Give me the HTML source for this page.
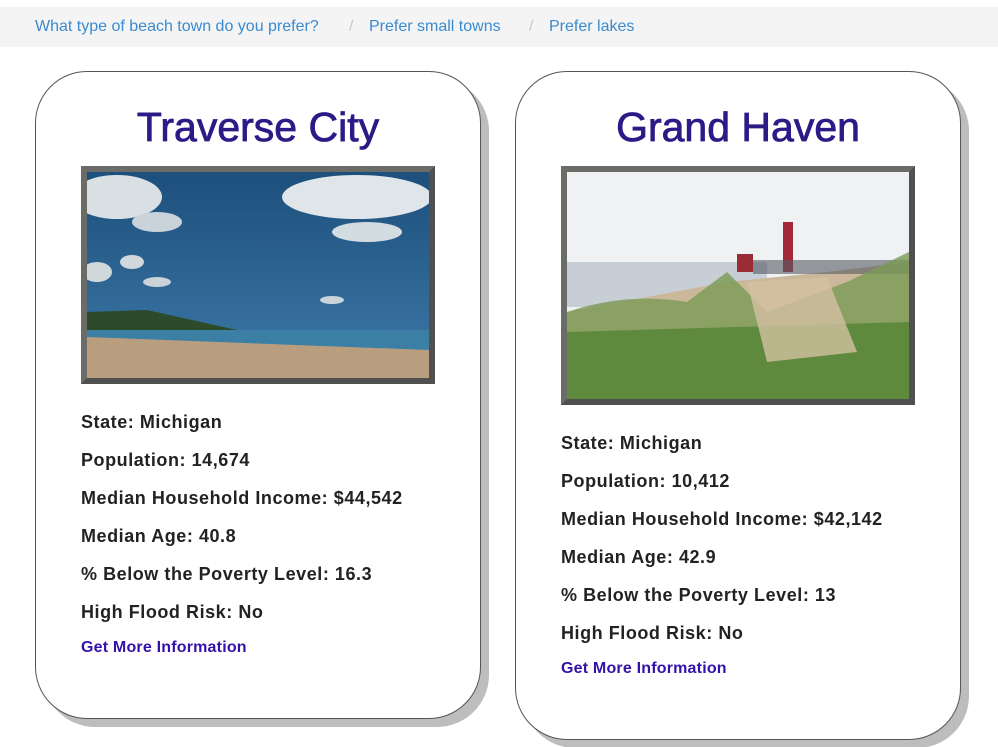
<!DOCTYPE html>
<html><head><style>
body{margin:0;width:998px;height:747px;background:#fff;font-family:"Liberation Sans",sans-serif;position:relative;overflow:hidden}
.bc{position:absolute;left:0;top:7px;width:998px;height:40px;background:#f4f4f4;font-family:"Liberation Sans",Arial,sans-serif;font-size:16px;color:#3a8ad0}
.bc span{position:absolute;top:11px}
.sep{color:#c8c8c8}
.card{position:absolute;width:444px;border:1px solid #555;border-radius:52px;background:#fff;box-shadow:8px 8px 0 #bdbdbd}
h1{position:absolute;left:0;width:100%;text-align:center;margin:0;top:32px;font-size:41px;font-weight:normal;color:#2e1a87;font-family:"Liberation Sans",sans-serif;-webkit-text-stroke:0.8px #2e1a87}
.img{position:absolute;left:45px;top:94px;border:6px solid;border-color:#6b6b67 #505050 #505050 #6b6b67;width:342px;overflow:hidden}
.info{position:absolute;left:45px;font-weight:bold;font-size:18px;color:#222;font-family:"Liberation Sans",sans-serif;letter-spacing:0.55px}
.info div{height:38px;line-height:22px}
.info a{color:#3311aa;font-size:16px;letter-spacing:0.2px;text-decoration:none;display:block;margin-top:0px}
</style></head><body>
<div class="bc"><span style="left:35px">What type of beach town do you prefer?</span><span class="sep" style="left:349px">/</span><span style="left:369px">Prefer small towns</span><span class="sep" style="left:529px">/</span><span style="left:549px">Prefer lakes</span></div>

<div class="card" style="left:35px;top:71px;height:646px">
<h1>Traverse City</h1>
<div class="img" style="height:206px">
<svg width="342" height="206">
<defs><linearGradient id="s1" x1="0" y1="0" x2="0" y2="1"><stop offset="0" stop-color="#1d4f7c"/><stop offset="1" stop-color="#3d79a8"/></linearGradient></defs>
<rect width="342" height="206" fill="url(#s1)"/>
<ellipse cx="30" cy="25" rx="45" ry="22" fill="#d9e0e3"/>
<ellipse cx="70" cy="50" rx="25" ry="10" fill="#c9d3d9"/>
<ellipse cx="270" cy="25" rx="75" ry="22" fill="#dfe5e8"/>
<ellipse cx="280" cy="60" rx="35" ry="10" fill="#d3dce1"/>
<ellipse cx="45" cy="90" rx="12" ry="7" fill="#d0d8dc"/>
<ellipse cx="10" cy="100" rx="15" ry="10" fill="#d0d8dc"/>
<ellipse cx="70" cy="110" rx="14" ry="5" fill="#c9d3d9"/>
<ellipse cx="245" cy="128" rx="12" ry="4" fill="#c9d3d9"/>
<path d="M0 140 L60 138 L150 158 L0 160Z" fill="#2d4a2a"/>
<rect y="158" width="342" height="20" fill="#3c7fa4"/>
<path d="M0 165 L342 178 L342 206 L0 206Z" fill="#b89e7e"/>
</svg></div>
<div class="info" style="top:339px">
<div>State: Michigan</div><div>Population: 14,674</div><div>Median Household Income: $44,542</div><div>Median Age: 40.8</div><div>% Below the Poverty Level: 16.3</div><div>High Flood Risk: No</div><a>Get More Information</a>
</div>
</div>

<div class="card" style="left:515px;top:71px;height:667px">
<h1>Grand Haven</h1>
<div class="img" style="height:227px">
<svg width="342" height="227">
<rect width="342" height="227" fill="#f0f1f3"/>
<rect y="90" width="200" height="45" fill="#c8ced6"/>
<path d="M160 110 L260 100 L342 90 L342 227 L0 227 L0 140Z" fill="#cbb89a"/>
<rect x="216" y="50" width="10" height="50" fill="#a3283a"/>
<rect x="170" y="82" width="16" height="18" fill="#9b2b35"/>
<rect x="186" y="88" width="156" height="14" fill="#555a60" opacity=".6"/>
<path d="M0 140 Q60 120 120 130 L160 100 L200 140 L280 110 L342 80 L342 227 L0 227Z" fill="#7a9a55" opacity=".8"/>
<path d="M0 160 L342 150 L342 227 L0 227Z" fill="#5f8a3e"/>
<path d="M180 110 L260 105 L290 180 L200 190Z" fill="#d3c0a1" opacity=".8"/>
</svg></div>
<div class="info" style="top:360px">
<div>State: Michigan</div><div>Population: 10,412</div><div>Median Household Income: $42,142</div><div>Median Age: 42.9</div><div>% Below the Poverty Level: 13</div><div>High Flood Risk: No</div><a>Get More Information</a>
</div>
</div>
</body></html>
